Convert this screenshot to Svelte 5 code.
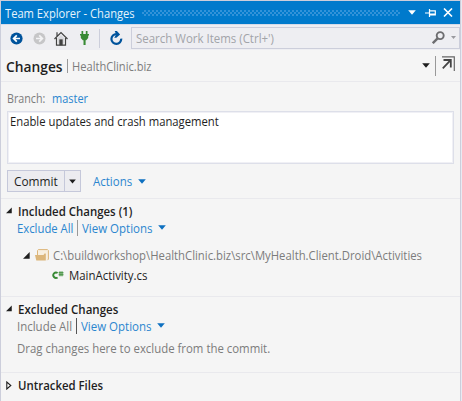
<script>
  const path = 'C:\\buildworkshop\\HealthClinic.biz\\src\\MyHealth.Client.Droid\\Activities';

  // Condenses or stretches a label horizontally so that it fills its width.
  function fit(node, width) {
    node.style.transform = `scaleX(${width / node.offsetWidth})`;
  }
</script>

{#snippet label(text, width)}
  <span class="label" style="width: {width}px"><span class="glyphs" use:fit={width}>{text}</span></span>
{/snippet}

{#snippet caret()}
  <svg class="caret" width="8" height="5" viewBox="0 0 8 5"><path d="M.2 .3h7.600L4 4.700z" fill="currentColor" /></svg>
{/snippet}

{#snippet expanded()}
  <svg class="tri" width="7" height="7" viewBox="0 0 7 7"><path d="M6.700 0v6.700H0z" fill="#1e1e1e" /></svg>
{/snippet}

<div class="panel">
  <header class="title">
    <span class="t-title">{@render label('Team Explorer - Changes', 130)}</span>
    <span class="grip"></span>
    {@render caret()}
    <svg class="pin" width="11" height="8" viewBox="0 0 11 8">
      <path d="M0 4h4M4.500 0v8M4.500 1.800h5.800v4H4.500M4.500 5.100h6" fill="none" stroke="#fff" stroke-width="1.200" />
    </svg>
    <svg class="close" width="10" height="9" viewBox="0 0 10 9">
      <path d="M1 .5l8 8M9 .5l-8 8" stroke="#fff" stroke-width="1.600" />
    </svg>
  </header>

  <div class="toolbar">
    <svg class="ic-back" width="13" height="13" viewBox="0 0 13 13">
      <circle cx="6.500" cy="6.500" r="6.100" fill="#00539c" />
      <path d="M10 6.500H3.800M6.800 3.300L3.600 6.500l3.200 3.200" fill="none" stroke="#fff" stroke-width="1.700" />
    </svg>
    <svg class="ic-fwd" width="13" height="13" viewBox="0 0 13 13">
      <circle cx="6.500" cy="6.500" r="6" fill="#c6c6c8" />
      <path d="M3 6.500h6.200M6.200 3.300l3.200 3.200-3.200 3.200" fill="none" stroke="#f3f3f5" stroke-width="1.700" />
    </svg>
    <svg class="ic-home" width="14" height="15" viewBox="0 0 14 15">
      <path d="M2.500 7v7.200h9V7" fill="#f5f5f5" stroke="#424242" stroke-width="1.200" />
      <path d="M3 1.200v4M.5 8L7 1.500 13.500 8" fill="none" stroke="#424242" stroke-width="1.200" />
      <path d="M7 4L3.900 7.100v5.700h1.500V8.300h3.200v4.500h1.500V7.100z" fill="#d8d8dc" />
      <path d="M5.300 8.300h3.400v6H5.300z" fill="#424242" />
    </svg>
    <svg class="ic-plug" width="9" height="14" viewBox="0 0 9 14">
      <path d="M1.500 0h1.700v3h2.600V0h1.700v3H9v1.600H8.200V7L6.200 9.200h-.6V14H3.500V9.200h-.7L.8 7V4.600H0V3h1.500z" fill="#388a34" />
    </svg>
    <i class="sep"></i>
    <svg class="ic-refresh" width="13" height="14" viewBox="0 0 13 14">
      <path d="M11.200 7.600a4.900 4.900 0 1 1-4.700-4.500" fill="none" stroke="#00539c" stroke-width="2.200" />
      <path d="M4.700 0h2.200l3.200 3.400-3.700 3.400H4.200l2-3.400z" fill="#00539c" />
    </svg>
    <div class="search">
      <span class="t-search">{@render label("Search Work Items (Ctrl+')", 138)}</span>
      <svg width="13" height="13" viewBox="0 0 13 13">
        <circle cx="8.200" cy="4.600" r="3.500" fill="none" stroke="#6d6d70" stroke-width="1.900" />
        <path d="M5.600 7.400L.8 12.200" stroke="#6d6d70" stroke-width="2.400" />
      </svg>
      <svg class="dd" width="5" height="3" viewBox="0 0 5 3"><path d="M0 0h5L2.500 3z" fill="#9a9a9f" /></svg>
    </div>
  </div>

  <div class="head">
    <b class="t-head">{@render label('Changes', 57)}</b>
    <i class="bar"></i>
    <span class="t-repo">{@render label('HealthClinic.biz', 80)}</span>
    <div class="right">
      {@render caret()}
      <i class="bar2"></i>
      <svg width="13" height="15" viewBox="0 0 13 15">
        <path d="M0 .8h12.300V15" fill="none" stroke="#666" stroke-width="1.200" />
        <path d="M1.500 4h7.300v7.500M8.600 4.200L.8 12.300" fill="none" stroke="#444" stroke-width="1.800" />
      </svg>
    </div>
  </div>

  <section class="commit">
    <div class="branch">
      <span class="t-branch">{@render label('Branch:', 38.5)}</span>
      <span class="link">{@render label('master', 36)}</span>
    </div>
    <div class="message">{@render label('Enable updates and crash management', 209)}</div>
    <div class="actions">
      <div class="button">
        <span class="main">{@render label('Commit', 43.5)}</span>
        <span class="drop">{@render caret()}</span>
      </div>
      <span class="link t-actions">{@render label('Actions', 39.5)}</span><span class="blue">{@render caret()}</span>
    </div>
  </section>

  <section class="included">
    <div class="sec">{@render expanded()}<b>{@render label('Included Changes (1)', 114.5)}</b></div>
    <div class="opts">
      <span class="link t-all">{@render label('Exclude All', 56.5)}</span><i class="bar3"></i>
      <span class="link t-view">{@render label('View Options', 71)}</span><span class="blue">{@render caret()}</span>
    </div>
    <div class="folder">
      {@render expanded()}
      <svg width="14" height="12" viewBox="0 0 14 12">
        <path d="M2.500 8V1.500l.8-.9h9.200l.9.900v8.700l-1 1" fill="#f8efdf" stroke="#dcb67a" stroke-width="1" />
        <path d="M0 6h8.500l1-1.500h1.300v7H1.300z" fill="#dcb67a" />
      </svg>
      <span class="t-path">{@render label(path, 369)}</span>
    </div>
    <div class="file">
      <svg width="12" height="9" viewBox="0 0 12 9">
        <path d="M5.600 2A2.700 2.700 0 1 0 5.600 6.400" fill="none" stroke="#388a34" stroke-width="1.900" />
        <path d="M8 .3v5M10 .3v5M6.600 1.800h4.900M6.600 3.800h4.900" stroke="#388a34" stroke-width="1" />
      </svg>
      <span class="t-file">{@render label('MainActivity.cs', 78.500)}</span>
    </div>
  </section>

  <section class="excluded">
    <div class="sec">{@render expanded()}<b>{@render label('Excluded Changes', 100)}</b></div>
    <div class="opts">
      <span class="gray t-all narrow">{@render label('Include All', 55.5)}</span><i class="bar3 dark"></i>
      <span class="link t-view">{@render label('View Options', 71)}</span><span class="blue">{@render caret()}</span>
    </div>
    <div class="hint">{@render label('Drag changes here to exclude from the commit.', 253)}</div>
  </section>

  <section class="untracked">
    <div class="sec">
      <svg class="tri" width="6" height="9" viewBox="0 0 6 9"><path d="M.8 1v7l4-3.500z" fill="#fff" stroke="#1e1e1e" stroke-width="1.100" /></svg>
      <b>{@render label('Untracked Files', 85.5)}</b>
    </div>
  </section>
</div>

<style>
  :global(body) { background: #e9eaf2; }
  .panel {
    box-sizing: border-box; width: 461px; height: 401px; overflow: hidden;
    border: solid #cccedb; border-width: 1px 1px 0; background: #f5f5f5;
    font: 12.800px/18px "Open Sans", "Noto Sans", sans-serif; color: #1e1e1e; white-space: nowrap;
  }
  svg { display: block; flex: none; }
  span, b { flex: none; display: block; }
  .glyphs { display: inline-block; transform-origin: 0 50%; }
  i { flex: none; display: block; width: 1px; }
  b { font-weight: 600; }
  .link { color: #2b86cf; }
  .blue { color: #0e70c0; }
  .gray { color: #7c7c7c; }

  .title { display: flex; align-items: center; height: 23px; padding-left: 4px; background: #007acc; color: #fff; }
  .t-title { width: 137px; color: #e6f3fb; }
  .grip {
    width: 258px; height: 6px;
    background: repeating-conic-gradient(#3393d9 0 25%, #007acc 0 50%) 0 0 / 4px 4px;
  }
  .title .caret { margin-left: 8px; }
  .pin { margin-left: 9px; }
  .close { margin-left: 7px; }

  .toolbar { display: flex; align-items: center; height: 26px; padding: 1px 0 0 9px; box-sizing: border-box; background: #eeeef2; border-top: 1px solid #d5dbe9; }
  .ic-fwd { margin-left: 10px; }
  .ic-home { margin-left: 8px; }
  .ic-plug { margin-left: 12px; }
  .sep { height: 19px; margin: 0 10px; background: #cccedb; }
  .search { box-sizing: border-box; display: flex; align-items: center; height: 22px; width: 329px; margin: -1px 0 0 8px; padding-left: 4px; border: 1px solid #cccedb; }
  .t-search { width: 296px; color: #a2a4a9; }
  .dd { margin-left: 6px; }

  .head { display: flex; align-items: center; height: 31px; padding-left: 5px; }
  .t-head { width: 61px; font-size: 15px; }
  .bar { height: 14px; background: #999; }
  .t-repo { margin-left: 4px; color: #7c7c7c; padding-top: 1px; }
  .right { display: flex; margin-left: auto; padding-right: 5px; align-items: center; }
  .bar2 { height: 20px; margin: 0 6px 0 5px; background: #999; }
  .right svg:last-child { margin-top: -4px; }

  section { box-sizing: border-box; border-top: 1px solid #e9e9ed; }
  .commit { height: 117px; padding: 7px 6px 0; }
  .branch { display: flex; height: 22px; }
  .t-branch { width: 45px; color: #7c7c7c; }
  .message { box-sizing: border-box; width: 447px; height: 53px; border: 1px solid #dddfe9; box-shadow: inset 0 0 0 1px #f0f0f5; background: #fff; padding: 0 2px; }
  .actions { display: flex; align-items: center; height: 22px; margin-top: 6px; }
  .button { box-sizing: border-box; display: flex; width: 74px; height: 22px; border: 1px solid #c5c8da; background: #ececf0; line-height: 20px; }
  .main { box-sizing: border-box; width: 57px; padding-left: 6px; border-right: 1px solid #c5c8da; }
  .drop { flex: 1; display: flex; align-items: center; justify-content: center; }
  .drop .caret { width: 7px; }
  .t-actions { width: 45px; margin-left: 12px; }

  .included { height: 98px; padding: 3px 0 0 5px; }
  .excluded { height: 76px; padding: 3px 0 0 5px; }
  .untracked { padding: 3px 0 0 5px; }
  .sec { display: flex; align-items: center; height: 17px; }
  .sec .tri { width: 6px; margin-right: 6px; }
  .opts { display: flex; align-items: center; height: 17px; padding-left: 11px; }
  .bar3 { height: 16px; background: #999; }
  .dark { background: #555; }
  .t-all { width: 60px; }
  .narrow { width: 59px; }
  .t-view { width: 76px; margin-left: 4px; }
  .folder { display: flex; align-items: center; height: 20px; margin-top: 9px; padding-left: 17px; }
  .folder .tri { margin-right: 5px; }
  .t-path { margin-left: 4px; color: #7c7c7c; }
  .file { display: flex; align-items: center; height: 20px; padding-left: 46px; }
  .t-file { margin-left: 5px; }
  .hint { padding: 5px 0 0 11px; color: #7c7c7c; }
  .untracked .sec { height: 18px; }
</style>
